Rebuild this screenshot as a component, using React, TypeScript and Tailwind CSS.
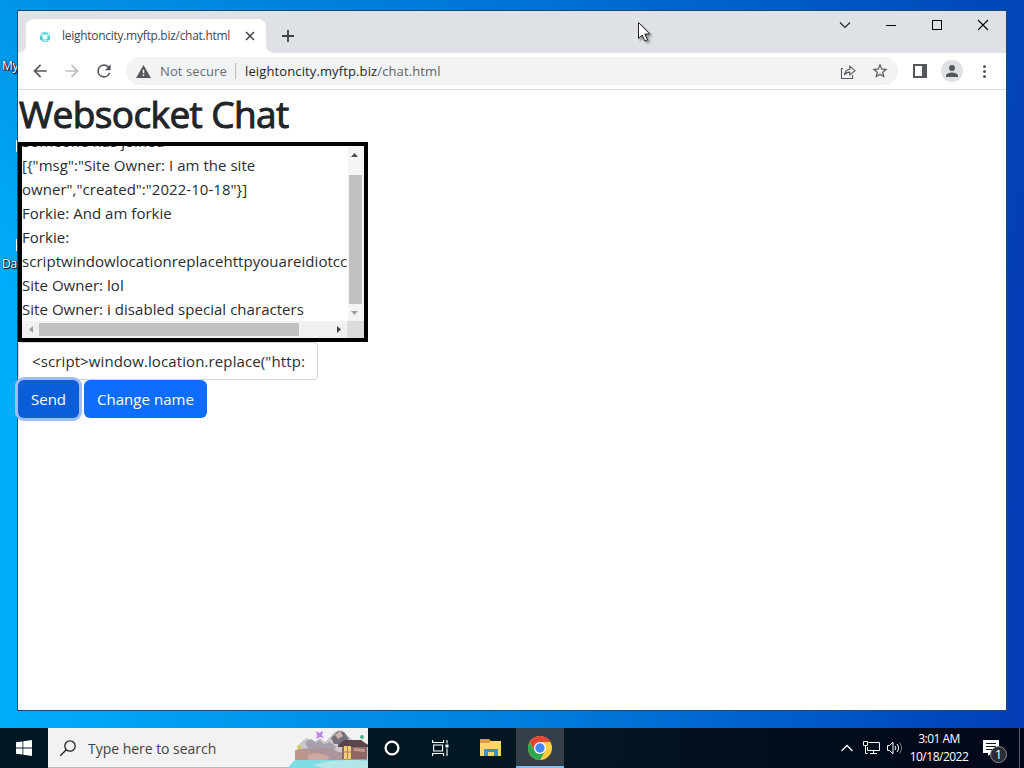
import type { ReactNode } from "react";

const messages = [
  "Someone has joined",
  '[{"msg":"Site Owner: I am the site',
  'owner","created":"2022-10-18"}]',
  "Forkie: And am forkie",
  "Forkie:",
  "scriptwindowlocationreplacehttpyouareidiotcc",
  "Site Owner: lol",
  "Site Owner: i disabled special characters",
];

type CenterProps = {
  className: string;
  children?: ReactNode;
};

const Center = ({ className, children }: CenterProps) => (
  <div className={`flex shrink-0 justify-center ${className}`}>{children}</div>
);

const TabStrip = () => (
  <div className="flex h-[42px] shrink-0 bg-[#dee1e6]">
    <div className="flex h-full w-2 items-end bg-white">
      <div className="h-full w-2 rounded-br-lg bg-[#dee1e6]" />
    </div>
    <div className="flex h-full w-60 items-end">
      <div className="flex h-[34px] w-full items-center rounded-t-lg bg-white">
        <svg viewBox="0 0 12 12" className="ml-[13px] mt-[2px] size-3" fill="none">
          <circle cx="6" cy="6" r="3.8" stroke="#6fd9e2" strokeWidth="2.8" />
          <path d="M1 3 4.5 4.5M11 3 7.6 4.6M4.4 9.3h3.4" stroke="#e2f8fa" strokeWidth="1.1" />
          <path d="M2 6.5v2M10 6.5v2" stroke="#2cbccb" strokeWidth="1.6" />
        </svg>
        <span className="ml-[11px] w-[170px] whitespace-nowrap text-[12px] tracking-[-0.28px] text-[#45494d]">
          leightoncity.myftp.biz/chat.html
        </span>
        <svg viewBox="0 0 10 10" className="ml-[13px] size-[10px]" stroke="#3c4043" strokeWidth="1.5">
          <path d="m1 1 8 8M9 1 1 9" />
        </svg>
      </div>
    </div>
    <div className="h-full w-2 bg-white">
      <div className="h-full w-2 rounded-bl-lg bg-[#dee1e6]" />
    </div>
    <Center className="ml-[3px] mt-2 h-[34px] w-[22px] items-center">
      <svg viewBox="0 0 12 12" className="size-3" stroke="#3c4043" strokeWidth="1.8">
        <path d="M6 0v12M0 6h12" />
      </svg>
    </Center>
    <div className="ml-auto flex h-7">
      <Center className="w-[46px] items-center">
        <svg viewBox="0 0 12 8" className="h-2 w-3" fill="none" stroke="#202124" strokeWidth="1.1">
          <path d="m1 1.5 5 5 5-5" />
        </svg>
      </Center>
      <Center className="w-[46px] items-center">
        <div className="h-px w-[10px] bg-black" />
      </Center>
      <Center className="w-[46px] items-center">
        <div className="size-[10px] border border-black" />
      </Center>
      <Center className="w-[46px] items-center">
        <svg viewBox="0 0 12 12" className="size-3" stroke="#000" strokeWidth="1.1">
          <path d="m1 1 10 10M11 1 1 11" />
        </svg>
      </Center>
    </div>
  </div>
);

const Toolbar = () => (
  <div className="flex h-[37px] shrink-0 items-center border-b border-[#dadce0] bg-white">
    <svg viewBox="0 0 24 24" className="ml-3 size-5" fill="#54585c">
      <path d="M20 11H7.83l5.59-5.59L12 4l-8 8 8 8 1.41-1.41L7.83 13H20z" />
    </svg>
    <svg viewBox="0 0 24 24" className="ml-3 size-5" fill="#bcbec1">
      <path d="m12 4-1.41 1.41L16.17 11H4v2h12.17l-5.58 5.59L12 20l8-8z" />
    </svg>
    <svg viewBox="0 0 24 24" className="ml-3 size-5" fill="#54585c">
      <path d="M17.65 6.35A7.96 7.96 0 0 0 12 4a8 8 0 1 0 7.73 10h-2.08A6 6 0 1 1 12 6c1.66 0 3.14.69 4.22 1.78L13 11h7V4z" />
    </svg>
    <div className="ml-3 flex h-7 w-[772px] items-center rounded-full bg-[#f1f3f4]">
      <svg viewBox="0 0 16 14" className="ml-[10px] h-[13px] w-[15px]">
        <path d="M8 0 0 14h16z" fill="#54585c" />
        <path d="M7.2 5h1.6v4H7.2zM7.2 10.3h1.6v1.6H7.2z" fill="#fff" />
      </svg>
      <span className="ml-[9px] w-[67px] whitespace-nowrap pt-px text-[13px] tracking-[0.1px] text-[#686c70]">
        Not secure
      </span>
      <div className="ml-2 h-4 w-px bg-[#b5b8bb]" />
      <span className="ml-[9px] whitespace-nowrap pt-px text-[13px] tracking-[0.12px] text-[#26292c]">
        leightoncity.myftp.biz
        <span className="text-[#5f6368]">/chat.html</span>
      </span>
      <svg viewBox="0 0 16 16" className="ml-auto mr-[15px] mt-px size-4" fill="none" stroke="#54585c" strokeWidth="1.1">
        <path d="M3 4.5H1.5v10h11V11" />
        <path d="M4.5 11c.3-3.8 2.2-5.6 5.3-5.8V2.3L15 6.7l-5.2 4.2V8.1C7.4 8 5.8 8.9 4.5 11Z" />
      </svg>
      <svg viewBox="0 0 24 24" className="mr-[9px] size-[18px]" fill="#54585c">
        <path d="m22 9.24-7.19-.62L12 2 9.19 8.63 2 9.24l5.46 4.73L5.82 21 12 17.27 18.18 21l-1.63-7.03zM12 15.4l-3.76 2.27 1-4.28-3.32-2.88 4.38-.38L12 6.1l1.71 4.04 4.38.38-3.32 2.88 1 4.28z" />
      </svg>
    </div>
    <div className="ml-[15px] size-[14px] border-2 border-r-[5px] border-[#54585c]" />
    <Center className="ml-[14px] size-[22px] items-center rounded-full bg-[#dee1e6]">
      <svg viewBox="0 0 24 24" className="size-[18px]" fill="#54585c">
        <path d="M12 12a4 4 0 1 0 0-8 4 4 0 0 0 0 8m0 2c-2.67 0-8 1.34-8 4v2h16v-2c0-2.66-5.33-4-8-4" />
      </svg>
    </Center>
    <div className="ml-5 flex flex-col gap-[2px]">
      <div className="size-[3px] rounded-full bg-[#54585c]" />
      <div className="size-[3px] rounded-full bg-[#54585c]" />
      <div className="size-[3px] rounded-full bg-[#54585c]" />
    </div>
  </div>
);

const ChatLog = () => (
  <div className="flex h-[200px] w-[350px] flex-col border-4 border-black bg-white">
    <div className="flex h-[175px] overflow-hidden">
      <div className="flex w-[326px] flex-col justify-end overflow-hidden text-[15px] leading-6 tracking-[0.04px]">
        {messages.map((message) => (
          <div key={message} className="h-6 shrink-0 whitespace-nowrap">
            {message}
          </div>
        ))}
      </div>
      <div className="flex w-4 flex-col items-start bg-[#f4f4f4]">
        <Center className="ml-[3px] h-[29px] items-start pt-[7px]">
          <svg viewBox="0 0 7 4" className="h-1 w-[7px]" fill="#4c4c4c">
            <path d="M0 4 3.5 0 7 4z" />
          </svg>
        </Center>
        <div className="ml-px h-[129px] w-[13px] bg-[#c1c1c1]" />
        <Center className="ml-[3px] h-[17px] items-center">
          <svg viewBox="0 0 7 4" className="h-1 w-[7px]" fill="#a0a0a0">
            <path d="m0 0 3.5 4L7 0z" />
          </svg>
        </Center>
      </div>
    </div>
    <div className="flex h-[17px] items-center bg-[#f1f1f1]">
      <Center className="w-[17px] items-center">
        <svg viewBox="0 0 4 7" className="h-[7px] w-1" fill="#a0a0a0">
          <path d="M4 0 0 3.5 4 7z" />
        </svg>
      </Center>
      <div className="h-[13px] w-[260px] bg-[#c1c1c1]" />
      <Center className="ml-auto w-[17px] items-center">
        <svg viewBox="0 0 4 7" className="h-[7px] w-1" fill="#404040">
          <path d="m0 0 4 3.5L0 7z" />
        </svg>
      </Center>
      <div className="h-full w-[17px] bg-[#dcdcdc]" />
    </div>
  </div>
);

const ChatPage = () => (
  <div className="flex flex-1 flex-col items-start text-[15px] text-[#292d31]">
    <h1 className="h-[52px] whitespace-nowrap pl-px text-[37px] leading-[48px] tracking-[-0.6px] text-[#212529] [-webkit-text-stroke:1px_#212529]">
      Websocket Chat
    </h1>
    <ChatLog />
    <div className="flex h-[38px] w-[300px] items-center overflow-hidden rounded border border-[#ced4da] px-[13px]">
      <span className="whitespace-nowrap tracking-[0.11px]">
        {'<script>window.location.replace("http:'}
      </span>
    </div>
    <div className="flex gap-[5px] text-white">
      <button className="h-[38px] w-[61px] whitespace-nowrap rounded-md bg-[#0b5ed7] shadow-[0_0_0_3px_#9cbdf8]">
        Send
      </button>
      <button className="h-[38px] w-[123px] whitespace-nowrap rounded-md bg-[#0d6efd] tracking-[0.05px]">
        Change name
      </button>
    </div>
  </div>
);

const SearchArt = () => (
  <svg viewBox="0 0 80 40" className="ml-auto h-10 w-20">
    <path d="M0 40c3-5 6-8 10-9h70v9z" fill="#7fdde6" />
    <path d="M26 37c14-5 34-6 54-4v7H34z" fill="#b4e6e8" />
    <path d="M10 20c1-5 5-8 9-10l4 2 5 1 4-3 5 4 6-6 3-4 8-2 7 7 4 3 8 2 7 2v14H10z" fill="#cdc6cf" />
    <path d="m17 14 6-3 5 4 3-3 5 4 6-2 6 5-4 6H22z" fill="#a49fa9" />
    <path d="m43 10 7-7 6 1 5 7-6 5h-9z" fill="#77717b" />
    <path d="m47 7 5-4 3 5-5 3z" fill="#c9b4b0" />
    <path d="M7 23c5-3 12-3 17-2 12-3 20 0 27 3l28 3v5H7z" fill="#ab949c" />
    <path d="M7 22c5-2 12 0 18 2l13 2v6H7z" fill="#bd958d" />
    <path d="M20 27c8-3 14-1 22 2l-3 3H19z" fill="#cda7a1" />
    <path d="m50 17 6-5h17l7 5v2H50z" fill="#5a464a" />
    <path d="M54 19h25v12H54z" fill="#8d6865" />
    <path d="M56 18h7v13h-7z" fill="#f6ce75" />
    <path d="M59.5 18v13M56 24h7" stroke="#a5714e" strokeWidth=".8" />
    <path d="m66 20 11 1v3l-11-1z" fill="#c39a91" />
    <path d="m28 3 3 2 4-2-1 4 2 3-4-1-4 2 1-4z" fill="#bd86e5" />
    <circle cx="11" cy="19" r="2" fill="#c8cf42" />
    <circle cx="74" cy="9" r="2" fill="#48b988" />
  </svg>
);

const Taskbar = () => (
  <div className="flex h-10 shrink-0 bg-linear-to-r from-[#001823] via-[#041722] to-[#020718] text-white">
    <Center className="w-12 items-center">
      <svg viewBox="0 0 16 16" className="size-4" fill="#fff">
        <path d="M0 2.3 6.5 1.4v6.2H0zM7.3 1.3 16 0v7.6H7.3zM0 8.4h6.5v6.2L0 13.7zM7.3 8.4H16V16l-8.7-1.3z" />
      </svg>
    </Center>
    <div className="flex w-80 items-center border-b border-[#bababa] bg-[#f2f2f2]">
      <svg viewBox="0 0 18 18" className="ml-[11px] size-[18px]" fill="none" stroke="#222" strokeWidth="1.3">
        <circle cx="11" cy="7" r="5.2" />
        <path d="m7.3 10.7-6 6" />
      </svg>
      <span className="ml-[11px] whitespace-nowrap pt-[2px] text-[14px] tracking-[-0.03px] text-[#444]">
        Type here to search
      </span>
      <SearchArt />
    </div>
    <Center className="w-12 items-center">
      <svg viewBox="0 0 16 16" className="size-4" fill="none" stroke="#fff" strokeWidth="2.3">
        <circle cx="8" cy="8" r="6.4" />
      </svg>
    </Center>
    <Center className="w-12 items-center">
      <svg viewBox="0 0 17 16" className="h-4 w-[17px]" fill="none" stroke="#fff" strokeWidth="1.1">
        <path d="M.6 0v2.5h11V0M.6 16v-2.5h11V16M1.6 5h9v6h-9zM15 0v3.5M15 8.5V16" />
        <path d="M13.5 4.5h3v3h-3z" fill="#fff" stroke="none" />
      </svg>
    </Center>
    <Center className="ml-[3px] w-12 items-center">
      <svg viewBox="0 0 22 18" className="h-[18px] w-[22px]">
        <path d="M0 0h9l2 2h10v4H0z" fill="#dca332" />
        <path d="M0 4h9l2-2h10v15H0z" fill="#ffd66b" />
        <path d="M4 17v-7h14v7h-4v-4H8v4z" fill="#408fc5" />
      </svg>
    </Center>
    <div className="ml-px flex w-12 flex-col bg-[#353f49]">
      <Center className="h-[38px] items-center pt-[2px]">
        <svg viewBox="0 0 24 24" className="size-6">
          <circle cx="12" cy="12" r="12" fill="#ffcd41" />
          <path d="M12 12 6.8 15 1.6 6A12 12 0 0 1 22.4 6H12z" fill="#e84435" />
          <path d="M1.6 6A12 12 0 0 0 12 24l5.2-9L12 12l-5.2 3z" fill="#2da94f" />
          <circle cx="12" cy="12" r="6" fill="#fff" />
          <circle cx="12" cy="12" r="4.7" fill="#4285f4" />
        </svg>
      </Center>
      <div className="h-[2px] bg-[#83bdf0]" />
    </div>
    <div className="ml-auto flex items-center">
      <svg viewBox="0 0 12 8" className="h-2 w-3" fill="none" stroke="#fff" strokeWidth="1.3">
        <path d="m.5 7 5.5-5.5L11.5 7" />
      </svg>
      <svg viewBox="0 0 17 14" className="ml-[10px] h-[14px] w-[17px]" fill="none" stroke="#fff">
        <path d="M5.5 1.5h11v8h-12V6M10.5 9.5v3M7 12.5h7M.5.5h4v4h-4zM2.5 4.5v8h2" />
      </svg>
      <svg viewBox="0 0 17 14" className="ml-[7px] h-[14px] w-[17px]" fill="none" stroke="#fff">
        <path d="M.5 4.5h2L6 1.2v11.6L2.5 9.5h-2zM8 5c1 1.2 1 2.8 0 4M10 3c2 2.5 2 5.5 0 8" />
        <path d="M12.3 1.5c3 3.5 3 7.5 0 11" stroke="#7d8490" />
      </svg>
      <div className="ml-[3px] flex w-[64px] flex-col items-center whitespace-nowrap text-[12px] leading-[18px] tracking-[-0.5px]">
        <span>3:01 AM</span>
        <span>10/18/2022</span>
      </div>
      <div className="relative ml-3 h-10 w-7">
        <svg viewBox="0 0 16 16" className="mt-3 size-4" fill="#fff">
          <path d="M0 0h16v13H9l-4 3v-3H0z" />
          <path d="M3 3.5h10M3 6.5h10M3 9.5h7" stroke="#101520" />
        </svg>
        <div className="absolute left-[7px] top-[18px] flex size-[17px] items-center justify-center rounded-full border border-[#8a8d92] bg-[#292d34] text-[13px]">
          1
        </div>
      </div>
      <div className="ml-2 h-full w-px bg-[#53606b]" />
      <div className="w-1" />
    </div>
  </div>
);

export default function App() {
  return (
    <div className="relative flex h-[768px] w-[1024px] flex-col overflow-hidden bg-linear-to-r from-[#00aefa] via-[#0080e0] to-[#043db5] font-['Open_Sans','Noto_Sans',sans-serif]">
      <div className="flex h-[728px] bg-linear-to-b from-[#0058b8]/30 via-transparent via-40% to-transparent pt-[10px]">
        <div className="flex w-[17px] shrink-0 flex-col overflow-hidden whitespace-nowrap pl-[2px] text-[12px] leading-4 tracking-[-0.3px] text-white [text-shadow:1px_1px_1px_#000,0_0_2px_#000]">
          <span className="mt-12">My</span>
          <div className="ml-[14px] mt-[66px] h-3 w-px bg-white" />
          <div className="ml-[14px] mt-[87px] h-3 w-px bg-white" />
          <span className="mt-[5px]">Da</span>
        </div>
        <div className="flex h-[701px] w-[990px] flex-col border border-[#174a70] bg-white">
          <TabStrip />
          <Toolbar />
          <ChatPage />
        </div>
      </div>
      <Taskbar />
      <svg viewBox="0 0 14 22" className="absolute left-[637px] top-[21px] h-[22px] w-[14px] drop-shadow-[2px_2px_1px_#0006]">
        <path d="M1.5 1.5v16l3.7-3.5 2.6 6 2.7-1.1L7.8 13h5z" fill="#fff" stroke="#222" />
      </svg>
    </div>
  );
}
